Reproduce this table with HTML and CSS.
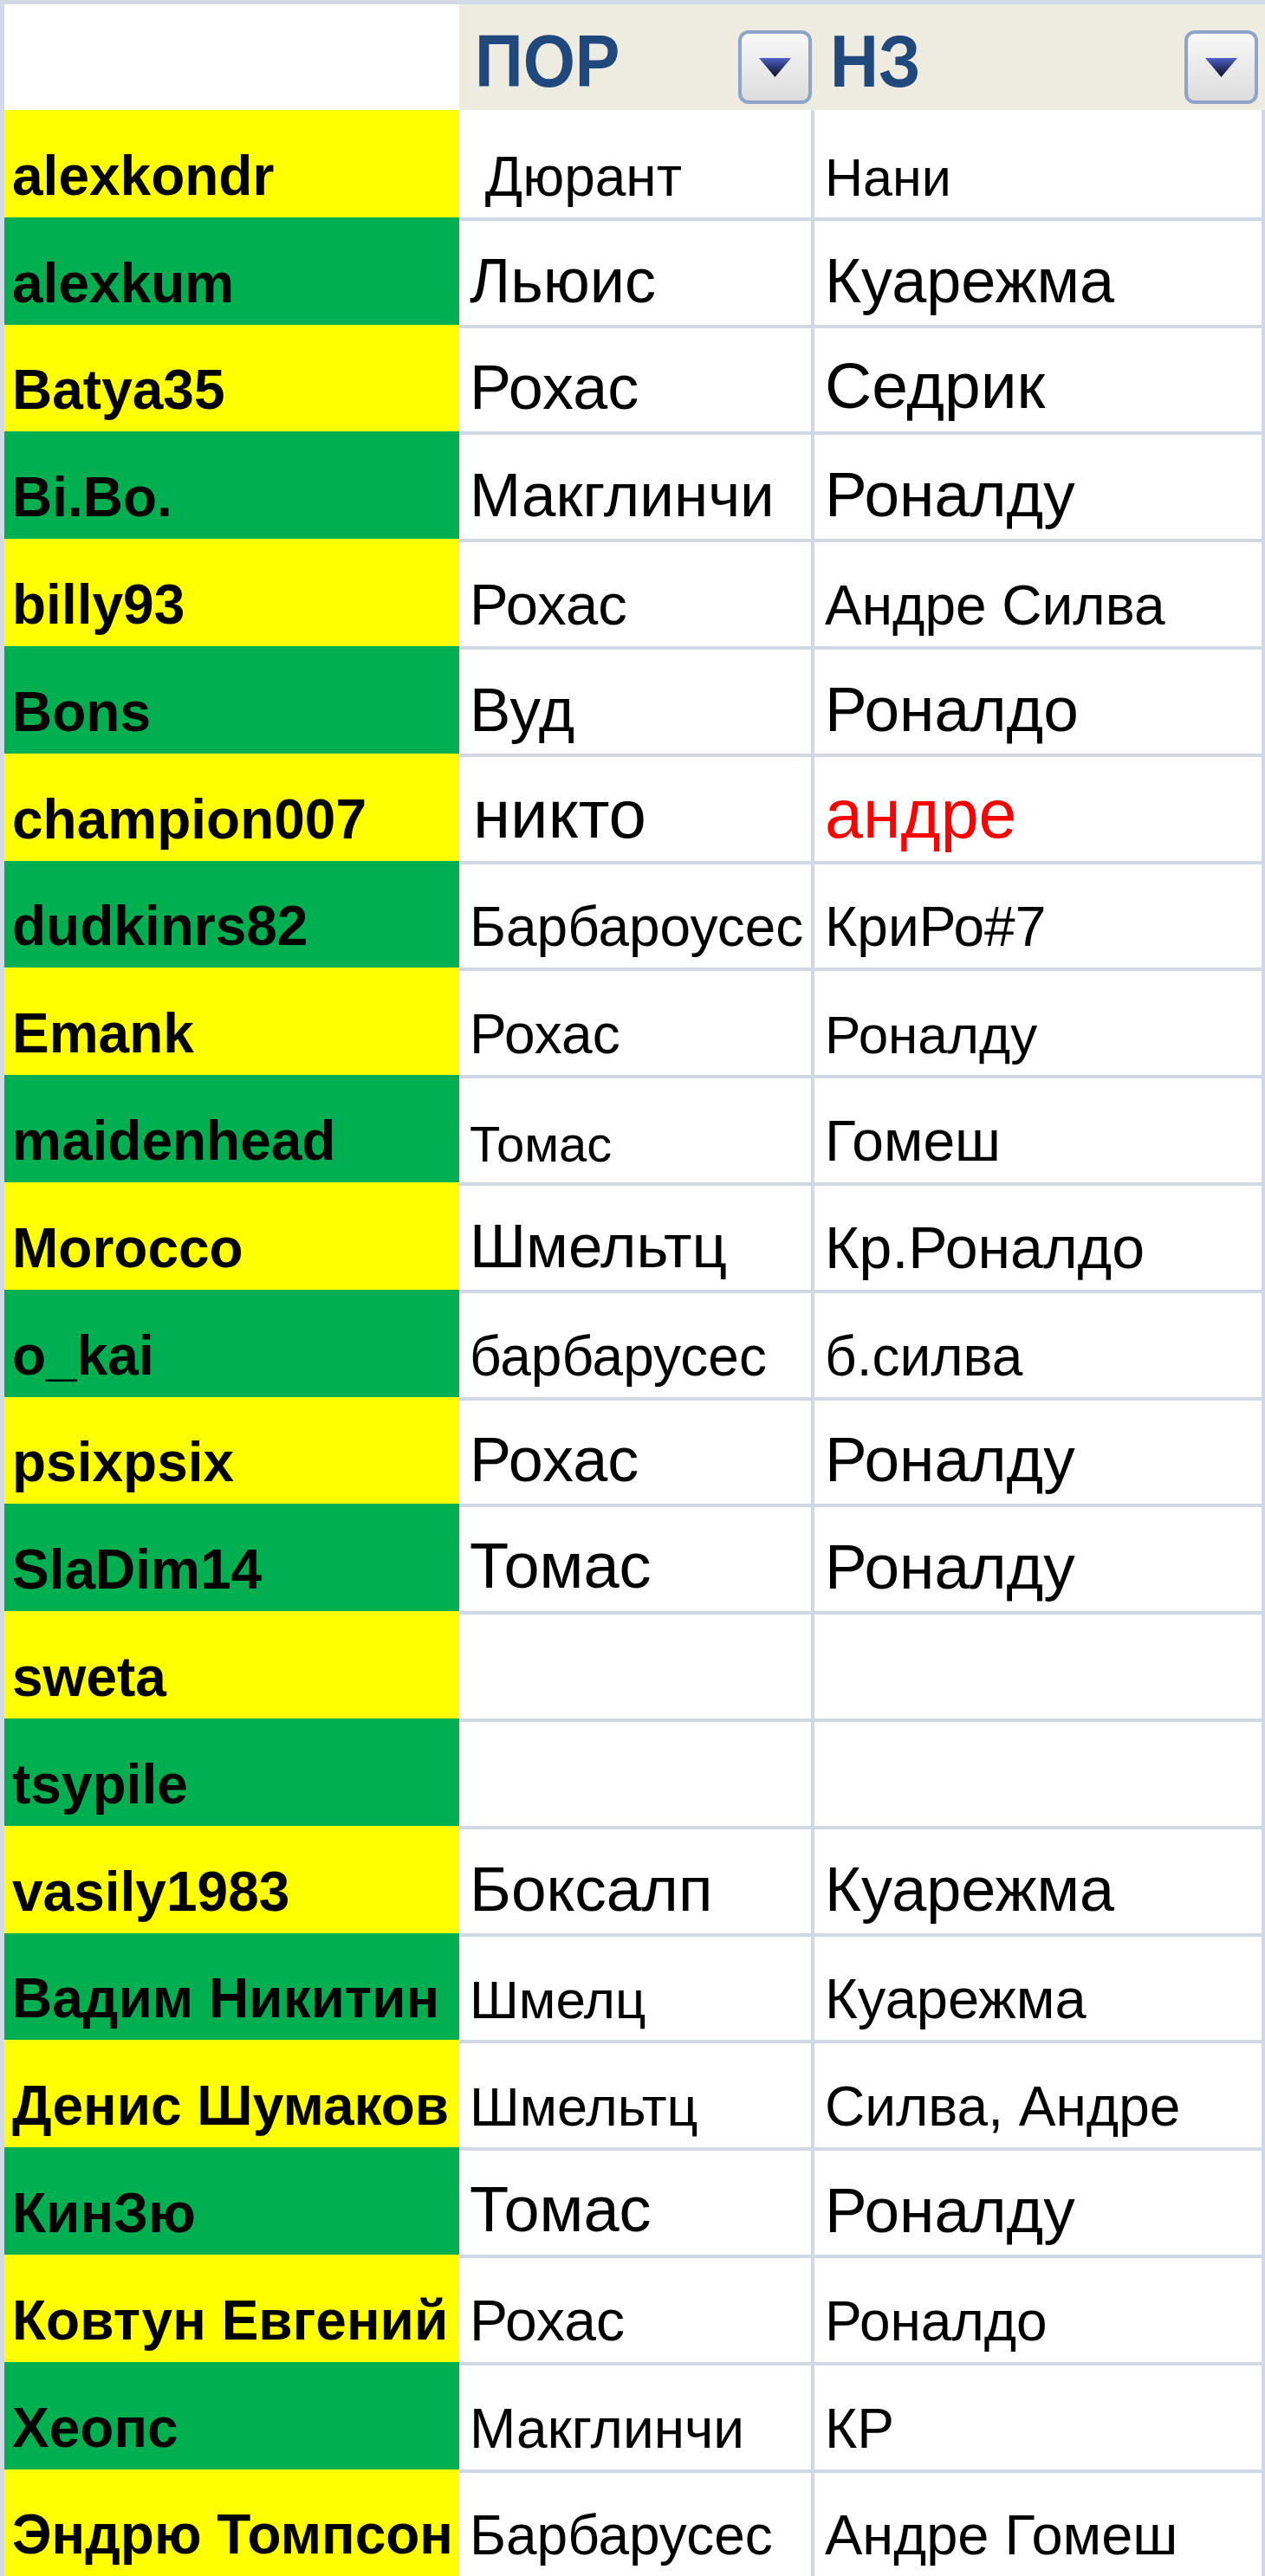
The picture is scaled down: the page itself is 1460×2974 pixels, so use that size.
FILE: index.html
```html
<!DOCTYPE html>
<html lang="ru">
<head>
  <meta charset="UTF-8">
  <title>ПОР / НЗ</title>
  <link rel="stylesheet" href="styles.css">
</head>
<body>
  <div class="sheet">
    <div class="head">
      <div class="corner"></div>
      <div class="hcell hcell-por">
        <span class="htitle">ПОР</span>
        <span class="filter">
          <svg width="37" height="22" viewBox="0 0 37 22"><defs><linearGradient id="ag1" x1="0" y1="0" x2="0" y2="1"><stop offset="0" stop-color="#4d60c6"/><stop offset="1" stop-color="#0d0d1c"/></linearGradient></defs><polygon points="0,0 37,0 18.5,22" fill="url(#ag1)"/></svg>
        </span>
      </div>
      <div class="hcell hcell-nz">
        <span class="htitle">НЗ</span>
        <span class="filter">
          <svg width="37" height="22" viewBox="0 0 37 22"><defs><linearGradient id="ag2" x1="0" y1="0" x2="0" y2="1"><stop offset="0" stop-color="#4d60c6"/><stop offset="1" stop-color="#0d0d1c"/></linearGradient></defs><polygon points="0,0 37,0 18.5,22" fill="url(#ag2)"/></svg>
        </span>
      </div>
    </div>

    <div class="row yellow">
      <div class="name">alexkondr</div>
      <div class="cell sz64"> Дюрант</div>
      <div class="cell cell-nz sz61">Нани</div>
    </div>
    <div class="row green">
      <div class="name">alexkum</div>
      <div class="cell sz72">Льюис</div>
      <div class="cell cell-nz sz72">Куарежма</div>
    </div>
    <div class="row yellow">
      <div class="name">Batya35</div>
      <div class="cell sz72">Рохас</div>
      <div class="cell cell-nz sz75">Седрик</div>
    </div>
    <div class="row green">
      <div class="name">Bi.Bo.</div>
      <div class="cell sz71">Макглинчи</div>
      <div class="cell cell-nz sz73">Роналду</div>
    </div>
    <div class="row yellow">
      <div class="name">billy93</div>
      <div class="cell sz67">Рохас</div>
      <div class="cell cell-nz sz64">Андре Силва</div>
    </div>
    <div class="row green">
      <div class="name">Bons</div>
      <div class="cell sz71">Вуд</div>
      <div class="cell cell-nz sz73">Роналдо</div>
    </div>
    <div class="row yellow">
      <div class="name">champion007</div>
      <div class="cell sz78"><span class="lead">никто</span></div>
      <div class="cell cell-nz sz79 red">андре</div>
    </div>
    <div class="row green">
      <div class="name">dudkinrs82</div>
      <div class="cell sz64">Барбароусес</div>
      <div class="cell cell-nz sz64">КриРо#7</div>
    </div>
    <div class="row yellow">
      <div class="name">Emank</div>
      <div class="cell sz64">Рохас</div>
      <div class="cell cell-nz sz62">Роналду</div>
    </div>
    <div class="row green">
      <div class="name">maidenhead</div>
      <div class="cell sz58">Томас</div>
      <div class="cell cell-nz sz66">Гомеш</div>
    </div>
    <div class="row yellow">
      <div class="name">Morocco</div>
      <div class="cell sz71">Шмельтц</div>
      <div class="cell cell-nz sz68">Кр.Роналдо</div>
    </div>
    <div class="row green">
      <div class="name">o_kai</div>
      <div class="cell sz64">барбарусес</div>
      <div class="cell cell-nz sz64">б.силва</div>
    </div>
    <div class="row yellow">
      <div class="name">psixpsix</div>
      <div class="cell sz72">Рохас</div>
      <div class="cell cell-nz sz73">Роналду</div>
    </div>
    <div class="row green">
      <div class="name">SlaDim14</div>
      <div class="cell sz74">Томас</div>
      <div class="cell cell-nz sz73">Роналду</div>
    </div>
    <div class="row yellow">
      <div class="name">sweta</div>
      <div class="cell"></div>
      <div class="cell cell-nz"></div>
    </div>
    <div class="row green">
      <div class="name">tsypile</div>
      <div class="cell"></div>
      <div class="cell cell-nz"></div>
    </div>
    <div class="row yellow">
      <div class="name">vasily1983</div>
      <div class="cell sz73">Боксалп</div>
      <div class="cell cell-nz sz72">Куарежма</div>
    </div>
    <div class="row green">
      <div class="name">Вадим Никитин</div>
      <div class="cell sz62">Шмелц</div>
      <div class="cell cell-nz sz65">Куарежма</div>
    </div>
    <div class="row yellow">
      <div class="name">Денис Шумаков</div>
      <div class="cell sz63">Шмельтц</div>
      <div class="cell cell-nz sz64">Силва, Андре</div>
    </div>
    <div class="row green">
      <div class="name">КинЗю</div>
      <div class="cell sz74">Томас</div>
      <div class="cell cell-nz sz73">Роналду</div>
    </div>
    <div class="row yellow">
      <div class="name">Ковтун Евгений</div>
      <div class="cell sz66">Рохас</div>
      <div class="cell cell-nz sz64">Роналдо</div>
    </div>
    <div class="row green">
      <div class="name">Хеопс</div>
      <div class="cell sz64">Макглинчи</div>
      <div class="cell cell-nz sz64">КР</div>
    </div>
    <div class="row yellow">
      <div class="name">Эндрю Томпсон</div>
      <div class="cell sz64">Барбарусес</div>
      <div class="cell cell-nz sz65">Андре Гомеш</div>
    </div>
  </div>
</body>
</html>
```

FILE: styles.css
```css
body {
  margin: 0;
  width: 1460px;
  height: 2974px;
  overflow: hidden;
  background: #fff;
  color: #000;
  font-family: "Liberation Sans", Arial, sans-serif;
}

.sheet {
  border-left: 5px solid #d3d9e6;
}

/* header band */
.head {
  display: flex;
  height: 122px;
  border-top: 5px solid #d3d9e6;
}

.corner {
  width: 525px;
  background: #fff;
}

.hcell {
  box-sizing: border-box;
  display: flex;
  align-items: flex-end;
  justify-content: space-between;
  padding-bottom: 7px;
  background: #eeece1;
}

.hcell-por {
  width: 410px;
  padding-left: 18px;
  padding-right: 3px;
}

.hcell-nz {
  flex: 1;
  padding-left: 18px;
  padding-right: 8px;
}

.htitle {
  font-size: 86px;
  font-weight: bold;
  line-height: 1;
  color: #1f497d;
  margin-bottom: 7px;
  transform: scaleX(0.9);
  transform-origin: left bottom;
}

.filter {
  box-sizing: border-box;
  width: 85px;
  height: 85px;
  display: flex;
  align-items: center;
  justify-content: center;
  border: 4px solid #8ea4c9;
  border-radius: 12px;
  background: linear-gradient(#f8f8f8, #dcdcdc);
}

/* rows */
.row {
  display: flex;
  height: 123.8px;
}

.name {
  box-sizing: border-box;
  width: 525px;
  display: flex;
  align-items: flex-end;
  padding: 0 0 16px 9px;
  font-size: 64px;
  font-weight: bold;
  line-height: 1;
  white-space: nowrap;
}

.yellow .name {
  background: #ffff00;
}

.green .name {
  background: #00b050;
}

.cell {
  box-sizing: border-box;
  width: 406px;
  display: flex;
  align-items: flex-end;
  padding: 0 0 15px 12px;
  line-height: 1;
  white-space: pre;
  background: #fff;
}

.cell-nz {
  flex: 1;
  border-left: 4px solid #d0d7e5;
  border-right: 4px solid #d0d7e5;
}

.row + .row .cell {
  border-top: 4px solid #d0d7e5;
}

.lead {
  margin-left: 4px;
}

.red {
  color: #ff0000;
}

.sz58 { font-size: 58px; }
.sz61 { font-size: 61px; }
.sz62 { font-size: 62px; }
.sz63 { font-size: 63px; }
.sz64 { font-size: 64px; }
.sz65 { font-size: 65px; }
.sz66 { font-size: 66px; }
.sz67 { font-size: 67px; }
.sz68 { font-size: 68px; }
.sz71 { font-size: 71px; }
.sz72 { font-size: 72px; }
.sz73 { font-size: 73px; }
.sz74 { font-size: 74px; }
.sz75 { font-size: 75px; }
.sz78 { font-size: 78px; }
.sz79 { font-size: 79px; }
```
